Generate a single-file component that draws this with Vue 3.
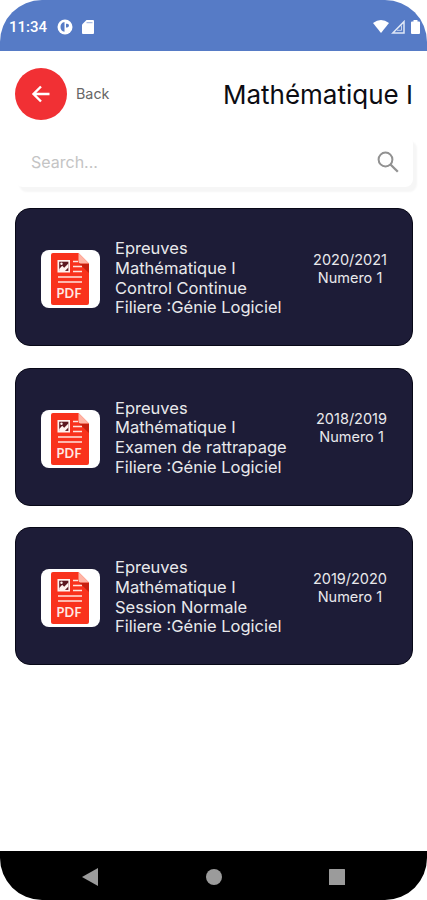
<template>
  <div class="phone">
    <!-- Status bar -->
    <header class="status-bar">
      <span class="time">11:34</span>
      <svg class="status-app" width="16" height="16" viewBox="0 0 16 16">
        <circle cx="8" cy="8" r="7.5" fill="#fff" />
        <path d="M7.500 3v9.800a5 5 0 0 1 0-9.800z M9 4.800h1.200a1.800 1.800 0 0 1 0 3.600H9z" fill="#567bc6" />
      </svg>
      <svg class="status-card" width="12" height="14" viewBox="0 0 12 14">
        <path d="M4.5 0H11a1 1 0 0 1 1 1v12a1 1 0 0 1-1 1H1a1 1 0 0 1-1-1V4.5z" fill="#fff" />
        <path d="M4.5 2.7h6" stroke="#567bc6" stroke-width="1" opacity="0.6" />
      </svg>
      <div class="signals">
        <svg width="16" height="13" viewBox="0 0 16 13">
          <path d="M8 13 0 3Q8-3 16 3z" fill="#fff" />
        </svg>
        <svg width="14" height="14" viewBox="0 0 14 14">
          <path d="M1.8 13 13 1.600V13z" fill="none" stroke="#dfe7f6" stroke-width="1.500" />
          <path d="M6 10.300h4.500V5.500" fill="none" stroke="#dfe7f6" stroke-width="0.800" />
        </svg>
        <svg class="battery" width="9" height="14" viewBox="0 0 9 14">
          <path d="M2.500 0h4v1.500H8a1 1 0 0 1 1 1V13a1 1 0 0 1-1 1H1a1 1 0 0 1-1-1V2.500a1 1 0 0 1 1-1h1.500z" fill="#fff" />
        </svg>
      </div>
    </header>

    <main class="content">
      <div class="top-row">
        <button class="back-btn" aria-label="Back">
          <svg width="20" height="20" viewBox="0 0 20 20">
            <path d="M18.500 10H2.500M10 2.500 2.500 10 10 17.500" fill="none" stroke="#fff" stroke-width="2.400" />
          </svg>
        </button>
        <span class="back-label">Back</span>
        <h1 class="title">Mathématique I</h1>
      </div>

      <div class="search">
        <input v-model="search" class="search-input" type="text" placeholder="Search..." />
        <svg width="22" height="22" viewBox="0 0 22 22">
          <circle cx="8.500" cy="8.500" r="6.900" fill="none" stroke="#929292" stroke-width="2" />
          <path d="M13.500 13.500l7.300 7.300" stroke="#929292" stroke-width="2.300" />
        </svg>
      </div>

      <div class="exam-list">
        <article v-for="exam in filteredExams" :key="exam.year" class="exam-card">
          <div class="pdf-box">
            <svg width="38" height="52" viewBox="0 0 38 52">
              <path d="M2 0h25.500L38 10.500V50a2 2 0 0 1-2 2H2a2 2 0 0 1-2-2V2a2 2 0 0 1 2-2z" fill="#f9321c" />
              <path d="M28 10.500h10V20z" fill="#c8200f" />
              <path d="M27.500 0 38 10.500h-8.500a2 2 0 0 1-2-2z" fill="#ffb5a6" />
              <rect x="6.500" y="7" width="12.500" height="12.500" fill="#fff3ef" />
              <rect x="8.200" y="8.700" width="9.200" height="9.200" fill="#5b1820" />
              <path d="M8.200 17.900v-2l3-3.200 2 2 4.200-4.200v4l-3.400 3.400z" fill="#fff3ef" />
              <circle cx="10.500" cy="10.700" r="1.200" fill="#fff3ef" />
              <path d="M22 8.500h5M22 13.500h9M22 18.500h9M7 24h24M7 29h24" stroke="#ffe3dc" stroke-width="1.300" />
              <text x="18" y="45" text-anchor="middle" textLength="25" class="pdf-text">PDF</text>
            </svg>
          </div>
          <div class="exam-info">
            <p>Epreuves</p>
            <p>{{ exam.subject }}</p>
            <p>{{ exam.type }}</p>
            <p>Filiere :{{ exam.field }}</p>
          </div>
          <div class="exam-meta">
            <p>{{ exam.year }}</p>
            <p>Numero {{ exam.number }}</p>
          </div>
        </article>
      </div>
    </main>

    <!-- System navigation -->
    <nav class="nav-bar">
      <svg width="16" height="18" viewBox="0 0 16 18">
        <path d="M0 9 16 0v18z" fill="#9b9b9b" />
      </svg>
      <svg width="16" height="16" viewBox="0 0 16 16">
        <circle cx="8" cy="8" r="8" fill="#9b9b9b" />
      </svg>
      <svg width="16" height="16" viewBox="0 0 16 16">
        <rect width="16" height="16" rx="0.500" fill="#9b9b9b" />
      </svg>
    </nav>
  </div>
</template>

<script setup>
import { ref, computed } from 'vue'

const search = ref('')

const exams = [
  {
    subject: 'Mathématique I',
    type: 'Control Continue',
    field: 'Génie Logiciel',
    year: '2020/2021',
    number: 1
  },
  {
    subject: 'Mathématique I',
    type: 'Examen de rattrapage',
    field: 'Génie Logiciel',
    year: '2018/2019',
    number: 1
  },
  {
    subject: 'Mathématique I',
    type: 'Session Normale',
    field: 'Génie Logiciel',
    year: '2019/2020',
    number: 1
  }
]

const filteredExams = computed(() =>
  exams.filter((exam) =>
    Object.values(exam).join(' ').toLowerCase().includes(search.value.toLowerCase())
  )
)
</script>

<style>
body {
  background: #fff;
}
</style>

<style scoped>
.phone {
  width: 427px;
  height: 900px;
  box-sizing: border-box;
  display: flex;
  flex-direction: column;
  overflow: hidden;
  border-radius: 42px;
  background: #fff;
  font-family: Inter, Roboto, sans-serif;
}
p,
h1 {
  margin: 0;
}
svg {
  display: block;
  flex-shrink: 0;
}

/* Status bar */
.status-bar {
  height: 51px;
  box-sizing: border-box;
  padding: 2px 7px 0 9px;
  display: flex;
  align-items: center;
  background: #567bc6;
  color: #fff;
}
.time {
  width: 48px;
  font-family: Roboto, sans-serif;
  font-size: 15px;
  font-weight: 500;
}
.status-card {
  margin-left: 9px;
}
.signals {
  margin-left: auto;
  display: flex;
  align-items: center;
  gap: 2px;
}
.battery {
  margin-left: 4px;
}

/* Page */
.content {
  flex: 1;
  padding: 17px 14px 0 15px;
}
.top-row {
  display: flex;
  align-items: center;
  height: 52px;
}
.back-btn {
  width: 52px;
  height: 52px;
  padding: 0;
  border: none;
  border-radius: 50%;
  background: #f13034;
  display: flex;
  align-items: center;
  justify-content: center;
}
.back-label {
  margin: 0 0 2px 9px;
  font-size: 14.300px;
  color: #666;
}
.title {
  margin-left: auto;
  font-size: 26px;
  font-weight: 400;
  color: #0c0c12;
  white-space: nowrap;
}
.search {
  margin-top: 16px;
  height: 51px;
  box-sizing: border-box;
  padding: 0 14px 0 16px;
  display: flex;
  align-items: center;
  background: #fff;
  border-radius: 8px;
  box-shadow: 4px 5px 2px #f6f6f6;
}
.search-input {
  flex: 1;
  min-width: 0;
  padding: 0;
  border: none;
  outline: none;
  background: transparent;
  font-family: inherit;
  font-size: 16px;
}
.search-input::placeholder {
  color: #c4c4c4;
}

/* Exam cards */
.exam-list {
  margin-top: 21px;
  display: flex;
  flex-direction: column;
  gap: 21.500px;
}
.exam-card {
  height: 138px;
  box-sizing: border-box;
  padding: 0 25px 0 24.500px;
  display: flex;
  align-items: center;
  border: 1px solid #080817;
  border-radius: 15px;
  background: #1d1c37;
  color: #e9e9ec;
}
.pdf-box {
  width: 59px;
  height: 58px;
  margin-top: 4px;
  flex-shrink: 0;
  display: flex;
  align-items: center;
  justify-content: center;
  border-radius: 8px;
  background: #fff;
}
.pdf-text {
  font-family: Lato, sans-serif;
  font-size: 12.500px;
  font-weight: 700;
  fill: #ffe9e3;
}
.exam-info {
  margin: 3px 0 0 15.500px;
  font-size: 16.500px;
  line-height: 19.600px;
  white-space: nowrap;
}
.exam-meta {
  margin: -17px 0 0 auto;
  font-size: 14.500px;
  line-height: 17.700px;
  text-align: center;
  white-space: nowrap;
}

/* System navigation */
.nav-bar {
  height: 49px;
  box-sizing: border-box;
  padding: 2px 82px 0;
  display: flex;
  align-items: center;
  justify-content: space-between;
  background: #000;
}
</style>
